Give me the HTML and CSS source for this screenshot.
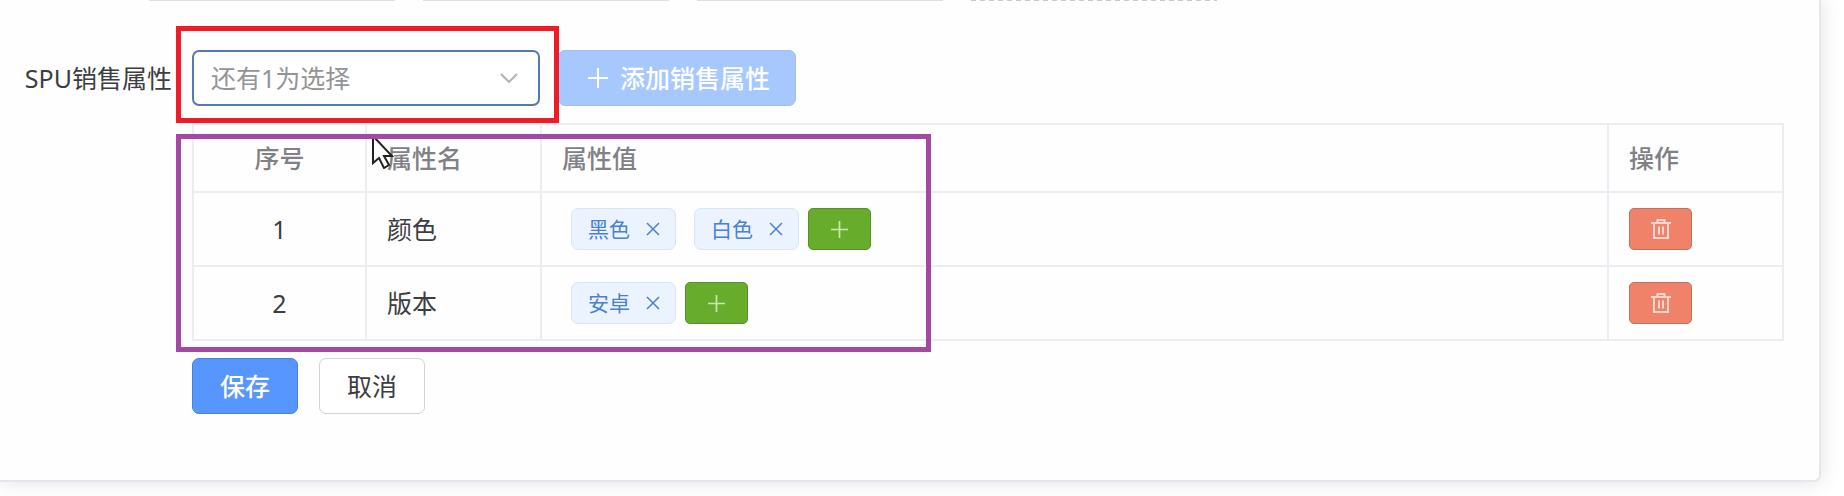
FILE: index.html
```html
<!DOCTYPE html>
<html lang="zh-CN">
<head>
<meta charset="utf-8">
<title>SPU销售属性</title>
<link rel="stylesheet" href="styles.css">
</head>
<body>
<svg class="sprite" aria-hidden="true">
  <symbol id="plus" viewBox="0 0 20 20"><path d="M10 0v20M0 10h20"/></symbol>
  <symbol id="close" viewBox="0 0 14 14"><path d="M1 1l12 12M13 1L1 13"/></symbol>
  <symbol id="trash" viewBox="0 0 20 20"><path d="M0 4h20M6.500 3V1h7v3M3 4v15h14V4M8 7.500v8M12 7.500v8"/></symbol>
</svg>
<main class="card">
  <div class="uploads">
    <div class="upload"></div>
    <div class="upload"></div>
    <div class="upload"></div>
    <div class="upload upload-add"></div>
  </div>
  <form class="form">
    <label class="label" for="attr">SPU销售属性</label>
    <div class="content">
      <div class="picker">
        <div class="select-wrap">
          <select class="select" id="attr"><option>还有1为选择</option></select>
          <svg class="chevron" viewBox="0 0 18 10"><path d="M1 1l8 8 8-8"/></svg>
          <div class="frame frame-red"></div>
        </div>
        <button class="btn btn-add" type="button" disabled><svg class="icon"><use href="#plus"/></svg>添加销售属性</button>
      </div>
      <div class="table-wrap">
        <table class="table">
          <thead>
            <tr><th class="col-index">序号</th><th class="col-name">属性名</th><th>属性值</th><th class="col-action">操作</th></tr>
          </thead>
          <tbody>
            <tr>
              <td class="col-index">1</td>
              <td>颜色</td>
              <td><div class="tags">
                <span class="tag">黑色<button class="tag-close" type="button" aria-label="删除黑色"><svg><use href="#close"/></svg></button></span>
                <span class="tag">白色<button class="tag-close" type="button" aria-label="删除白色"><svg><use href="#close"/></svg></button></span>
                <button class="btn-small green" type="button" aria-label="添加属性值"><svg class="icon-plus"><use href="#plus"/></svg></button>
              </div></td>
              <td><button class="btn-small red" type="button" aria-label="删除颜色"><svg class="icon"><use href="#trash"/></svg></button></td>
            </tr>
            <tr>
              <td class="col-index">2</td>
              <td>版本</td>
              <td><div class="tags">
                <span class="tag">安卓<button class="tag-close" type="button" aria-label="删除安卓"><svg><use href="#close"/></svg></button></span>
                <button class="btn-small green" type="button" aria-label="添加属性值"><svg class="icon-plus"><use href="#plus"/></svg></button>
              </div></td>
              <td><button class="btn-small red" type="button" aria-label="删除版本"><svg class="icon"><use href="#trash"/></svg></button></td>
            </tr>
          </tbody>
        </table>
        <svg class="cursor" viewBox="0 0 22 34"><path d="M1 1v27l6-5 5 10 5-3-5-9h8z"/></svg>
        <div class="frame frame-purple"></div>
      </div>
      <div class="actions">
        <button class="btn btn-save" type="button">保存</button>
        <button class="btn btn-cancel" type="button">取消</button>
      </div>
    </div>
  </form>
</main>
</body>
</html>
```
FILE: styles.css
```css
* { box-sizing: border-box; }
body {
  margin: 0;
  min-height: 100vh;
  background: #fff;
  color: #3c3d40;
  font-family: "Noto Sans", "Noto Sans CJK SC", sans-serif;
  font-size: 25px;
  line-height: 36px;
}
button, select { font: inherit; margin: 0; }
svg { display: block; fill: none; stroke: currentColor; }
.sprite { position: absolute; width: 0; height: 0; }
.card {
  margin-right: 23px;
  padding: 0 35px 66px 0;
  background: #fefefe;
  border: solid #e4e7ed;
  border-width: 0 2px 2px 0;
  border-radius: 0 0 7px 0;
  box-shadow: 0 0 21px rgba(0, 0, 0, 0.12);
}
.uploads { display: flex; gap: 28px; padding-left: 149px; }
.upload { width: 246px; height: 1px; background: #dedfe6; }
.upload-add { background: repeating-linear-gradient(90deg, #c9c9cb 0 5px, #fefefe 5px 9px); }
.form { display: flex; padding-top: 49px; }
.label { flex: 0 0 192px; padding-right: 20px; line-height: 56px; text-align: right; white-space: nowrap; }
.content { flex: 1; min-width: 0; }
.picker { display: flex; gap: 18px; margin-bottom: 17px; }
.select-wrap { position: relative; width: 348px; }
.select {
  display: block;
  width: 100%;
  height: 56px;
  padding: 0 50px 0 17px;
  appearance: none;
  background: #fff;
  border: 2px solid #527bb5;
  border-radius: 7px;
  color: #939498;
}
.chevron { position: absolute; top: 23px; right: 22px; width: 18px; height: 10px; color: #b0b2b7; stroke-width: 2; pointer-events: none; }
.frame { position: absolute; pointer-events: none; }
.frame-red { inset: -24px -19px -17px -16px; border: 5px solid #ee1c24; z-index: 2; }
.frame-purple { left: -16px; top: 11px; bottom: -11px; width: 755px; border: 5px solid #a349a4; }
.btn { height: 56px; padding: 0 27px; border: 1px solid; border-radius: 7px; line-height: 36px; white-space: nowrap; }
.btn-add { display: flex; align-items: center; gap: 12px; padding: 0 25px 0 29px; background: #a6c8ff; border-color: #9fbfed; color: #fff; font-weight: 500; }
.icon { width: 20px; height: 20px; stroke-width: 2; }
.icon-plus { width: 17px; height: 17px; stroke-width: 2; }
.table-wrap { position: relative; }
.table { width: 100%; table-layout: fixed; border-collapse: collapse; }
.table th, .table td { padding: 0 20px; border: 2px solid #ebedf3; text-align: left; font-weight: 400; }
.table th { height: 68px; color: #808186; font-weight: 500; }
.table td { height: 74px; }
.table .col-index { width: 173px; text-align: center; }
.col-name, .col-action { width: 175px; }
.tags { display: flex; align-items: center; padding-left: 9px; }
.tag {
  display: flex;
  align-items: center;
  justify-content: space-between;
  width: 105px;
  height: 42px;
  margin-right: 18px;
  padding: 0 15px 0 16px;
  background: #ebf3ff;
  border: 1px solid #d8e5f8;
  border-radius: 7px;
  color: #4b81ce;
  font-size: 21px;
}
.tag:nth-last-child(2) { margin-right: 9px; }
.tag-close { padding: 0; border: 0; background: none; color: inherit; }
.tag-close svg { width: 14px; height: 14px; stroke-width: 1.5; }
.btn-small { display: flex; align-items: center; justify-content: center; width: 63px; height: 42px; padding: 0; border: 1px solid; border-radius: 5px; color: #fff; }
.green { background: #67ad2b; border-color: #55932a; }
.green svg { color: #c9e7b0; }
.red { background: #f0826a; border-color: #c17161; }
.red svg { color: #fcd9d0; }
.cursor { position: absolute; left: 180px; top: 12px; width: 22px; height: 34px; fill: #fff; stroke: #222; stroke-width: 2; }
.actions { display: flex; gap: 21px; padding-top: 17px; }
.btn-save { background: #5795ff; border-color: #4a7fd9; color: #fff; font-weight: 500; }
.btn-cancel { background: #fff; border-color: #d0d2d8; color: #3c3d40; }
```
